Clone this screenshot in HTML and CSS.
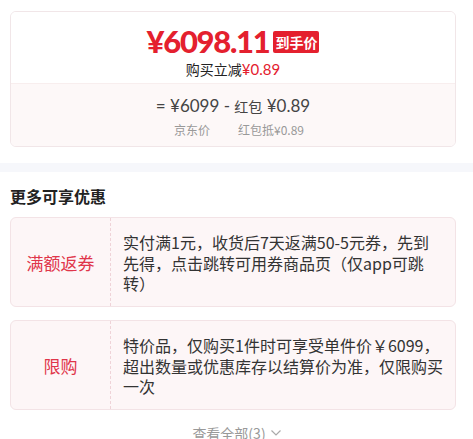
FILE: index.html
```html
<!DOCTYPE html>
<html lang="zh">
<head>
  <meta charset="UTF-8">
  <title>到手价</title>
  <link rel="stylesheet" href="styles.css">
</head>
<body>
  <div class="price-card">
    <div class="price-top">
      <div class="price-line">
        <span class="price">¥6098.11</span>
        <span class="tag">到手价</span>
      </div>
      <div class="reduce">购买立减<span class="red">¥0.89</span></div>
    </div>
    <div class="price-bottom">
      <div class="formula">= ¥6099 - <span class="small">红包</span> ¥0.89</div>
      <div class="labels">
        <span>京东价</span>
        <span>红包抵¥0.89</span>
      </div>
    </div>
  </div>

  <div class="band"></div>

  <div class="more">
    <h2>更多可享优惠</h2>

    <div class="promo">
      <div class="promo-name">满额返券</div>
      <div class="promo-desc">实付满1元，收货后7天返满50-5元券，先到先得，点击跳转可用券商品页（仅app可跳转）</div>
    </div>

    <div class="promo">
      <div class="promo-name">限购</div>
      <div class="promo-desc">特价品，仅购买1件时可享受单件价￥6099，超出数量或优惠库存以结算价为准，仅限购买一次</div>
    </div>

    <div class="see-all">查看全部(3)
      <svg width="12" height="8" viewBox="0 0 12 8"><path d="M1.5 1.5 L6 6 L10.5 1.5" fill="none" stroke="#aaa" stroke-width="1.2"/></svg>
    </div>
  </div>
</body>
</html>
```

FILE: styles.css
```css
* {
  box-sizing: border-box;
}

body {
  margin: 0;
  background: #fff;
  font-family: "Noto Sans CJK SC", "Microsoft YaHei", sans-serif;
  color: #333;
}

.price-card {
  margin: 11px 17px 0 10px;
  border: 1px solid #f1e6e8;
  border-radius: 6px;
  overflow: hidden;
}

.price-top {
  height: 71px;
  padding-top: 10px;
  text-align: center;
  background: #fff;
}

.price-line {
  display: flex;
  justify-content: center;
  align-items: center;
  gap: 4px;
  height: 38px;
}

.price {
  font-family: "Lato", "Noto Sans", sans-serif;
  font-weight: 900;
  font-size: 31px;
  line-height: 38px;
  color: #e4202e;
  letter-spacing: -1.3px;
}

.tag {
  background: #e4202e;
  color: #fff;
  font-weight: bold;
  font-size: 14px;
  line-height: 22px;
  padding: 0 2px;
  border-radius: 2px;
  margin-top: 2px;
}

.reduce {
  font-size: 14px;
  line-height: 18px;
  color: #222;
}

.red {
  color: #e4202e;
  font-family: "Lato", sans-serif;
  font-size: 15px;
}

.price-bottom {
  height: 63px;
  background: #fdf8f8;
  border-top: 1px solid #f8eeee;
  text-align: center;
  padding-top: 11px;
}

.formula {
  font-family: "Lato", "Noto Sans CJK SC", sans-serif;
  font-size: 17px;
  line-height: 22px;
  color: #444;
}

.formula .small {
  font-family: "Noto Sans CJK SC", sans-serif;
  font-size: 14px;
}

.labels {
  display: flex;
  justify-content: center;
  gap: 28px;
  margin-top: 4px;
  padding-left: 12px;
  font-size: 12px;
  color: #999;
}

.band {
  height: 9px;
  background: #f6f7fb;
  margin-top: 16px;
}

.more {
  padding: 0 17px 0 10px;
}

.more h2 {
  font-size: 16px;
  font-weight: bold;
  color: #222;
  margin: 13px 0 10px;
  line-height: 22px;
}

.promo {
  display: flex;
  align-items: center;
  background: #fdf6f7;
  border: 1px solid #f3e3e6;
  border-radius: 6px;
  min-height: 90px;
  margin-bottom: 13px;
}

.promo-name {
  width: 100px;
  flex-shrink: 0;
  align-self: stretch;
  display: flex;
  align-items: center;
  justify-content: center;
  border-right: 1px dashed #efd3d8;
  font-size: 17px;
  color: #e0354a;
}

.promo-desc {
  flex: 1;
  padding: 6px 11px 4px 12px;
  font-size: 16px;
  line-height: 20.5px;
  color: #333;
}

.see-all {
  display: flex;
  justify-content: center;
  align-items: center;
  gap: 4px;
  font-size: 14px;
  line-height: 20px;
  color: #999;
  padding-left: 8px;
}
```
